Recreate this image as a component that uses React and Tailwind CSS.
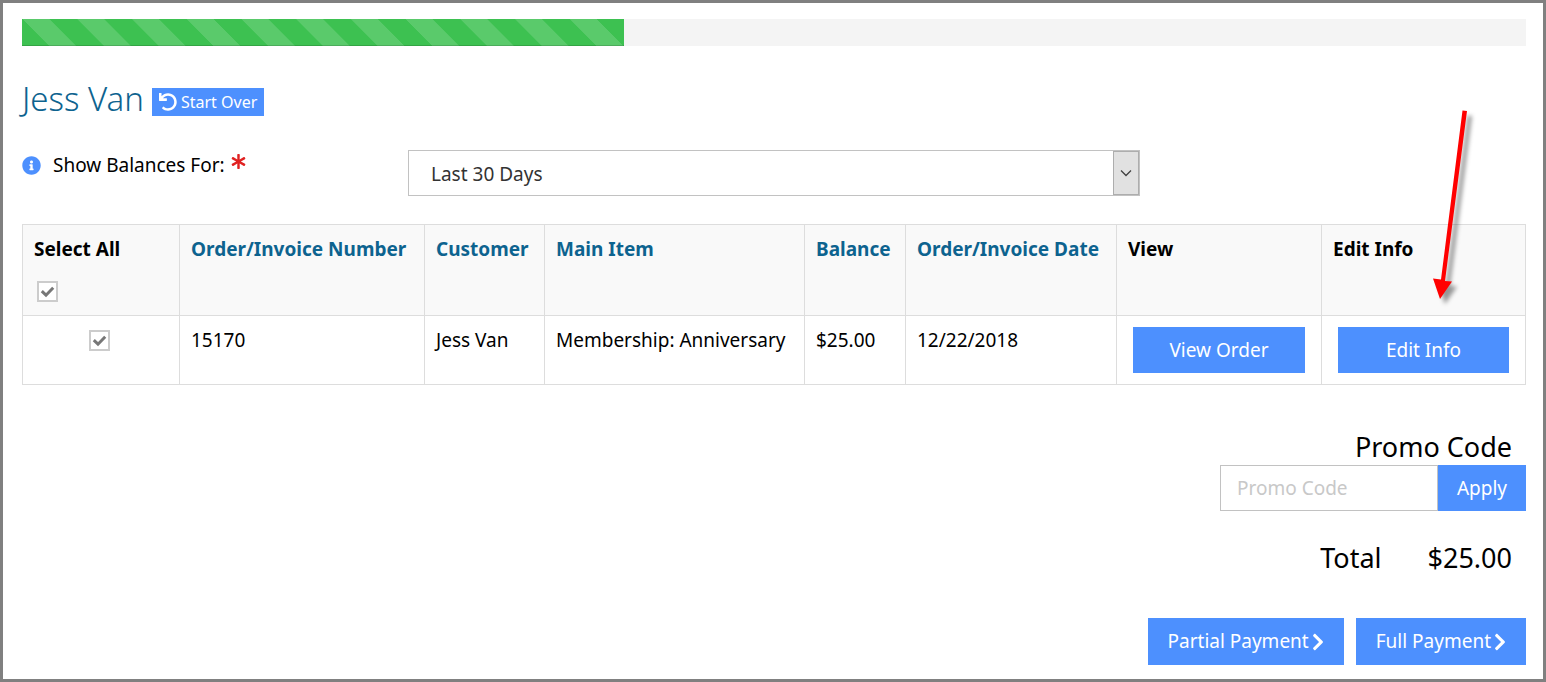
import React, { useState } from 'react';
import { FaUndo, FaInfoCircle, FaChevronRight, FaAsterisk } from 'react-icons/fa';

const orders = [
    {
        number: '15170',
        customer: 'Jess Van',
        item: 'Membership: Anniversary',
        balance: '$25.00',
        date: '12/22/2018'
    }
];

const headCell = 'border border-[#dddddd] px-[11px] pt-[11px] pb-[13px] font-bold';
const bodyCell = 'border border-[#dddddd] px-[11px] py-[11px]';
const primaryButton = 'bg-[#4d90fe] text-white';

function Checkbox({ label, checked, onChange, className }) {
    return (
        <div className={`relative size-[21px] ${className}`}>
            <input
                type="checkbox"
                aria-label={label}
                checked={checked}
                onChange={onChange}
                className="block size-full appearance-none border-2 border-[#cccccc] bg-white"
            />
            {checked && (
                <svg className="pointer-events-none absolute inset-0 size-full" viewBox="0 0 21 21" fill="none">
                    <path d="M4.8 10.2 L9 14.2 L16.2 6.8" stroke="#777777" strokeWidth="3" />
                </svg>
            )}
        </div>
    );
}

function SortLink({ children }) {
    return <a href="#" className="text-[#0d638f]">{children}</a>;
}

export default function App() {
    const [selected, setSelected] = useState(orders.map((order) => order.number));
    const [range, setRange] = useState('30');
    const [promo, setPromo] = useState('');
    const allSelected = selected.length === orders.length;

    const toggleAll = () => setSelected(allSelected ? [] : orders.map((order) => order.number));

    const toggleOrder = (number) => {
        setSelected(selected.includes(number) ? selected.filter((n) => n !== number) : [...selected, number]);
    };

    return (
        <div className="relative min-h-screen border-[3px] border-[#808080] bg-white pt-4 pr-[17px] pb-[14px] pl-[19px] font-['Noto_Sans',sans-serif] text-[19px] leading-[27px] text-black">
            <div role="progressbar" aria-label="Checkout progress" aria-valuenow={40} className="h-[27px] bg-[#f4f4f4]">
                <div className="h-full w-2/5 bg-[#3dc151] bg-[linear-gradient(45deg,rgba(255,255,255,.15)_25%,transparent_25%,transparent_50%,rgba(255,255,255,.15)_50%,rgba(255,255,255,.15)_75%,transparent_75%,transparent)] bg-[length:calc(100%/11)_200%] shadow-[inset_0_-1px_0_rgba(0,0,0,.15)]" />
            </div>

            <header className="mt-7 flex items-center gap-2">
                <h1 className="text-[33px] leading-[50px] font-light text-[#0d638f]">Jess Van</h1>
                <button type="button" className={`${primaryButton} mt-1.5 flex h-7 items-center gap-1 px-[7px] text-base`}>
                    <FaUndo className="size-[18px]" />
                    Start Over
                </button>
            </header>

            <div className="mt-[26px] flex items-start">
                <div className="flex w-[386px] shrink-0 items-center pt-0.5">
                    <FaInfoCircle className="size-[19px] text-[#4d90fe]" />
                    <label htmlFor="range" className="ml-3 flex">
                        Show Balances For:
                        <FaAsterisk className="mt-0.5 ml-1.5 size-[15px] text-[#e02222]" />
                    </label>
                </div>
                <div className="relative w-[732px]">
                    <select
                        id="range"
                        value={range}
                        onChange={(e) => setRange(e.target.value)}
                        className="block h-[46px] w-full appearance-none border border-[#c2c2c2] bg-white px-[22px] pt-0.5 text-[#333333]"
                    >
                        <option value="30">Last 30 Days</option>
                        <option value="60">Last 60 Days</option>
                        <option value="90">Last 90 Days</option>
                    </select>
                    <span className="pointer-events-none absolute inset-y-px right-px flex w-[26px] items-center justify-center border border-[#adadad] bg-[#e1e1e1]">
                        <svg className="size-3" viewBox="0 0 12 12" fill="none" stroke="#404040" strokeWidth="1.3">
                            <path d="M1 3.5 L6 8.5 L11 3.5" />
                        </svg>
                    </span>
                </div>
            </div>

            <table className="mt-7 w-full table-fixed border-collapse text-left">
                <colgroup>
                    <col className="w-[157px]" />
                    <col className="w-[245px]" />
                    <col className="w-[120px]" />
                    <col className="w-[260px]" />
                    <col className="w-[101px]" />
                    <col className="w-[211px]" />
                    <col className="w-[205px]" />
                    <col className="w-[204px]" />
                </colgroup>
                <thead className="bg-[#f9f9f9] align-top">
                    <tr>
                        <th className={headCell}>
                            Select All
                            <Checkbox label="Select all orders" checked={allSelected} onChange={toggleAll} className="mt-[18px] ml-[3px]" />
                        </th>
                        <th className={headCell}><SortLink>Order/Invoice Number</SortLink></th>
                        <th className={headCell}><SortLink>Customer</SortLink></th>
                        <th className={headCell}><SortLink>Main Item</SortLink></th>
                        <th className={headCell}><SortLink>Balance</SortLink></th>
                        <th className={headCell}><SortLink>Order/Invoice Date</SortLink></th>
                        <th className={headCell}>View</th>
                        <th className={headCell}>Edit Info</th>
                    </tr>
                </thead>
                <tbody className="align-top">
                    {orders.map((order) => (
                        <tr key={order.number}>
                            <td className="border border-[#dddddd] py-[14px] pr-[14px] pl-[11px]">
                                <Checkbox
                                    label={`Select order ${order.number}`}
                                    checked={selected.includes(order.number)}
                                    onChange={() => toggleOrder(order.number)}
                                    className="mx-auto"
                                />
                            </td>
                            <td className={bodyCell}>{order.number}</td>
                            <td className={bodyCell}>{order.customer}</td>
                            <td className={bodyCell}>{order.item}</td>
                            <td className={bodyCell}>{order.balance}</td>
                            <td className={bodyCell}>{order.date}</td>
                            <td className="border border-[#dddddd] px-4 py-[11px]">
                                <button type="button" className={`${primaryButton} block h-[46px] w-full`}>View Order</button>
                            </td>
                            <td className="border border-[#dddddd] px-4 py-[11px]">
                                <button type="button" className={`${primaryButton} block h-[46px] w-full`}>Edit Info</button>
                            </td>
                        </tr>
                    ))}
                </tbody>
            </table>

            <div className="mt-11 flex flex-col items-end">
                <label htmlFor="promo" className="pr-[14px] text-[27px] leading-9">Promo Code</label>
                <div className="flex">
                    <input
                        id="promo"
                        type="text"
                        placeholder="Promo Code"
                        value={promo}
                        onChange={(e) => setPromo(e.target.value)}
                        className="h-[46px] w-[218px] border border-[#c2c2c2] px-4 placeholder:text-[#c8c8c8]"
                    />
                    <button type="button" className={`${primaryButton} h-[46px] w-[88px]`}>Apply</button>
                </div>
                <div className="mt-[29px] flex gap-[46px] pr-[14px] text-[27px] leading-9">
                    <span>Total</span>
                    <span>$25.00</span>
                </div>
                <div className="mt-[42px] flex gap-3">
                    <button type="button" className={`${primaryButton} flex h-[47px] items-center gap-[3px] px-5`}>
                        Partial Payment
                        <FaChevronRight className="h-5 w-3" />
                    </button>
                    <button type="button" className={`${primaryButton} flex h-[47px] items-center gap-[3px] px-5`}>
                        Full Payment
                        <FaChevronRight className="h-5 w-3" />
                    </button>
                </div>
            </div>

            {/* Callout arrow pointing at the Edit Info button */}
            <svg
                className="pointer-events-none absolute top-[105px] right-[61px] h-[200px] w-[60px] drop-shadow-[5px_5px_2px_rgba(0,0,0,.4)]"
                viewBox="0 0 60 200"
                fill="#ff0000"
            >
                <path d="M40.5 2.5 L45 3 L23 173 L30 173.5 L18 191 L11 170.5 L19 171.5 Z" />
            </svg>
        </div>
    );
}
